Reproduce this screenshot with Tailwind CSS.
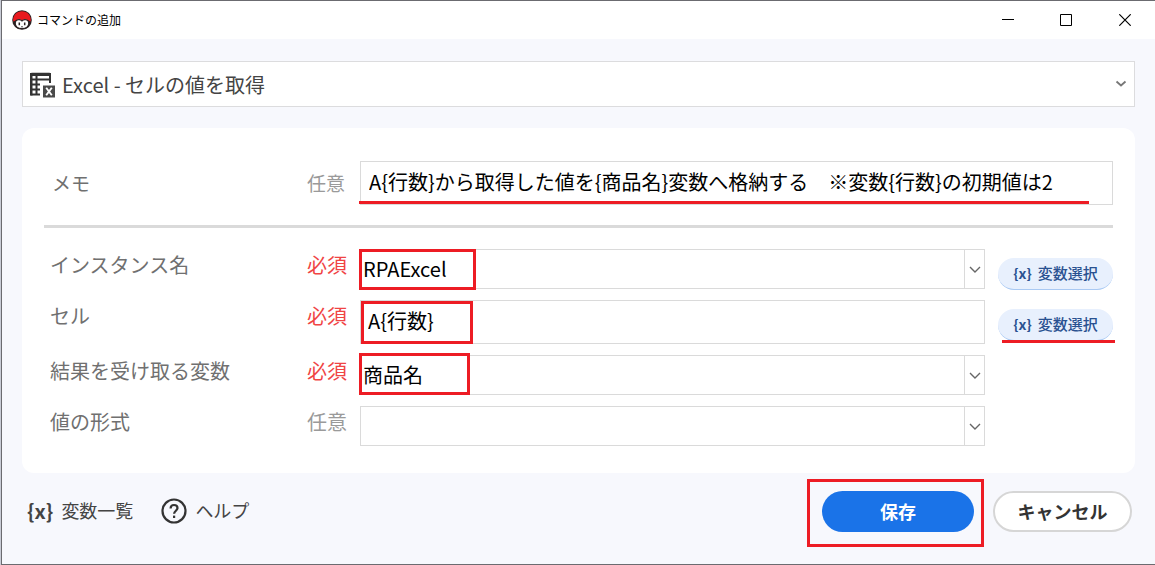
<!DOCTYPE html>
<html lang="ja">
<head>
    <meta charset="UTF-8">
    <meta name="viewport" content="width=device-width, initial-scale=1.0">
    <title>コマンドの追加</title>
    <script src="https://cdn.jsdelivr.net/npm/@tailwindcss/browser@4"></script>
</head>
<body class="min-h-screen flex bg-[#c9ccd6] pl-px font-['Noto_Sans_CJK_JP',sans-serif] text-[#444]">
    <div class="flex-1 min-w-0 flex flex-col bg-[#f7f8fd] border-l border-y border-[#6b6b70]">
        <!-- title bar -->
        <header class="h-[38px] shrink-0 flex items-center bg-white pl-2.5 text-black">
            <svg class="w-5 h-5 mr-[5px]" viewBox="0 0 20 20">
                <circle cx="10" cy="10" r="9.800" fill="#2b2223"/>
                <path d="M1.200 11.500C.5 5 5 1.200 10 1.200S19.500 5 18.800 11.500L15 10H5z" fill="#e8191f"/>
                <path d="M3.200 13C3.200 9.500 8 8.500 10 11C12 8.500 16.800 9.500 16.800 13C16.800 16.500 14 18.600 10 18.600S3.200 16.500 3.200 13z" fill="#fff" stroke="#2b2223" stroke-width="1.200"/>
                <path d="M7.300 12.500v2.800M12.700 12.500v2.800" stroke="#2b2223" stroke-width="1.500"/>
                <path d="M9 16.800h2" stroke="#2b2223" stroke-width=".8"/>
            </svg>
            <h1 class="flex-1 text-[12px] leading-5">コマンドの追加</h1>
            <button type="button" aria-label="最小化" class="w-[58px] h-full flex items-center justify-center">
                <svg class="w-3 h-3" viewBox="0 0 12 12" stroke="#000"><path d="M0 5.500h12"/></svg>
            </button>
            <button type="button" aria-label="最大化" class="w-[58px] h-full flex items-center justify-center">
                <svg class="w-3 h-3" viewBox="0 0 12 12" fill="none" stroke="#000"><path d="M.5 .5h11v11H.5z"/></svg>
            </button>
            <button type="button" aria-label="閉じる" class="w-[60px] h-full flex items-center justify-center">
                <svg class="w-3 h-3" viewBox="0 0 12 12" stroke="#000" stroke-width="1.200"><path d="M.3 .3l11.400 11.400M11.700 .3L.3 11.700"/></svg>
            </button>
        </header>

        <form class="flex-1 flex flex-col pt-[22px] pl-5 pr-5">
            <!-- command -->
            <div class="relative">
                <svg class="absolute left-[7px] top-[11px] w-[27px] h-[26px] pointer-events-none" viewBox="0 0 27 26">
                    <path d="M2 2h19v9M2 1v21.500h9M2 7.500h19M2 12.500h9M2 17.500h9M7.500 1v21.500" fill="none" stroke="#333" stroke-width="2"/>
                    <path d="M1 2.500Q1 .8 2.700 .8H20.500Q22 .8 22 2.500V4H1z" fill="#333"/>
                    <path d="M1 2h2.500v21.500H2.500Q1 23.500 1 22z" fill="#333"/>
                    <path d="M14 13.500h12v12H14z" fill="#4a4a4a"/>
                    <path d="M17.200 15.800l5.600 7.400M22.800 15.800l-5.600 7.400" stroke="#fff" stroke-width="1.900"/>
                </svg>
                <select aria-label="コマンド" class="block w-full h-[46px] appearance-none bg-white border border-[#dcdcde] pl-[39px] pr-8 pt-0.5 text-[20px]">
                    <option>Excel - セルの値を取得</option>
                </select>
                <svg class="absolute right-2 top-[17px] w-3 h-3 pointer-events-none" viewBox="0 0 12 12" fill="none" stroke="#777" stroke-width="1.800"><path d="M1.500 3.500l4.500 4 4.500-4"/></svg>
            </div>

            <section class="mt-[21px] bg-white rounded-xl pt-[33px] pb-[27px] pl-[22px] pr-[22px] text-[20px] text-[#707070]">
                <div class="flex items-center">
                    <label for="memo" class="w-[263px] pl-2 text-[19px]">メモ</label>
                    <span class="w-[53px] text-[19px] text-[#9a9a9a]">任意</span>
                    <div class="relative flex-1">
                        <input id="memo" type="text" value="A{行数}から取得した値を{商品名}変数へ格納する　※変数{行数}の初期値は2" class="block w-full h-11 border border-[#dadada] pl-2 pb-1 text-black">
                        <div class="absolute -left-px right-6 bottom-px h-[3px] bg-[#ed1c24]"></div>
                    </div>
                </div>

                <hr class="mt-5 mb-[21px] h-[3px] border-0 bg-[#dadada]">

                <div class="flex flex-col gap-[11px]">
                    <div class="flex h-10">
                        <label for="instance" class="w-[263px] pl-1.5 leading-8">インスタンス名</label>
                        <span class="w-[53px] leading-8 text-[#f04444]">必須</span>
                        <div class="relative flex-1">
                            <select id="instance" class="block w-full h-full appearance-none bg-white border border-[#dadada] pl-0.5 text-black">
                                <option>RPAExcel</option>
                            </select>
                            <div class="absolute right-0 inset-y-0 w-[21px] flex items-center justify-center border-l border-[#dadada] pointer-events-none">
                                <svg class="w-3 h-3" viewBox="0 0 12 12" fill="none" stroke="#666" stroke-width="1.400"><path d="M1 4l5 5 5-5"/></svg>
                            </div>
                            <div class="absolute -left-px top-0 w-[117px] h-[41px] border-3 border-[#ed1c24] pointer-events-none"></div>
                        </div>
                        <div class="w-32 pl-[13px] pt-[9px]">
                            <button type="button" class="w-[115px] h-8 flex items-center justify-center gap-1.5 rounded-full bg-[#e8f0fd] border-b border-[#a9c9f3] text-[15px] font-medium text-[#2a5291]">
                                <span class="text-[14px] font-bold">{x}</span>変数選択
                            </button>
                        </div>
                    </div>
                    <div class="flex h-11">
                        <label for="cell" class="w-[263px] pl-1.5 leading-8">セル</label>
                        <span class="w-[53px] leading-8 text-[#f04444]">必須</span>
                        <div class="relative flex-1">
                            <input id="cell" type="text" value="A{行数}" class="block w-full h-full border border-[#dadada] pl-[7px] pb-1 text-black">
                            <div class="absolute left-px top-px w-[112px] h-[43px] border-3 border-[#ed1c24] pointer-events-none"></div>
                        </div>
                        <div class="relative w-32 pl-[13px] pt-[9px]">
                            <button type="button" class="w-[115px] h-8 flex items-center justify-center gap-1.5 rounded-full bg-[#e8f0fd] border-b border-[#a9c9f3] text-[15px] font-medium text-[#2a5291]">
                                <span class="text-[14px] font-bold">{x}</span>変数選択
                            </button>
                            <div class="absolute left-[17px] -right-0.5 bottom-px h-[3px] bg-[#ed1c24]"></div>
                        </div>
                    </div>
                    <div class="flex h-10">
                        <label for="result" class="w-[263px] pl-1.5 leading-8">結果を受け取る変数</label>
                        <span class="w-[53px] leading-8 text-[#f04444]">必須</span>
                        <div class="relative flex-1">
                            <select id="result" class="block w-full h-full appearance-none bg-white border border-[#dadada] pl-0.5 text-black">
                                <option>商品名</option>
                            </select>
                            <div class="absolute right-0 inset-y-0 w-[21px] flex items-center justify-center border-l border-[#dadada] pointer-events-none">
                                <svg class="w-3 h-3" viewBox="0 0 12 12" fill="none" stroke="#666" stroke-width="1.400"><path d="M1 4l5 5 5-5"/></svg>
                            </div>
                            <div class="absolute -left-px -top-0.5 w-[111px] h-[42px] border-3 border-[#ed1c24] pointer-events-none"></div>
                        </div>
                        <div class="w-32"></div>
                    </div>
                    <div class="flex h-10">
                        <label for="format" class="w-[263px] pl-1.5 leading-8">値の形式</label>
                        <span class="w-[53px] leading-8 text-[#9a9a9a]">任意</span>
                        <div class="relative flex-1">
                            <select id="format" class="block w-full h-full appearance-none bg-white border border-[#dadada] pl-0.5 text-black">
                                <option></option>
                            </select>
                            <div class="absolute right-0 inset-y-0 w-[21px] flex items-center justify-center border-l border-[#dadada] pointer-events-none">
                                <svg class="w-3 h-3" viewBox="0 0 12 12" fill="none" stroke="#666" stroke-width="1.400"><path d="M1 4l5 5 5-5"/></svg>
                            </div>
                        </div>
                        <div class="w-32"></div>
                    </div>
                </div>
            </section>

            <footer class="flex items-center pt-[18px] pb-8 pl-[5px] pr-[3px] text-[18px]">
                <button type="button" class="flex items-center gap-2 pb-0.5">
                    <span class="text-[20px] leading-6 font-bold">{x}</span>変数一覧
                </button>
                <button type="button" class="ml-7 flex items-center gap-2 pb-0.5">
                    <svg class="w-[26px] h-[26px]" viewBox="0 0 26 26" fill="none" stroke="#333" stroke-width="2.200">
                        <circle cx="13" cy="13" r="11.500"/>
                        <path d="M9.600 10.500C9.600 8.200 11 7 13 7s3.500 1.200 3.500 3.100c0 2.500-3.400 2.900-3.400 5.700"/>
                        <path d="M13.100 17.600v2.400"/>
                    </svg>
                    ヘルプ
                </button>
                <div class="relative ml-auto mr-[19px]">
                    <button type="submit" class="block w-[152px] h-[41px] rounded-full bg-[#1a73e8] font-bold text-white">保存</button>
                    <div class="absolute -left-[15px] -right-2.5 -top-3 -bottom-[15px] border-3 border-[#ed1c24] pointer-events-none"></div>
                </div>
                <button type="button" class="w-[139px] h-[41px] rounded-full bg-white border-2 border-[#d6d6d6] font-bold text-[#333]">キャンセル</button>
            </footer>
        </form>
    </div>
</body>
</html>
